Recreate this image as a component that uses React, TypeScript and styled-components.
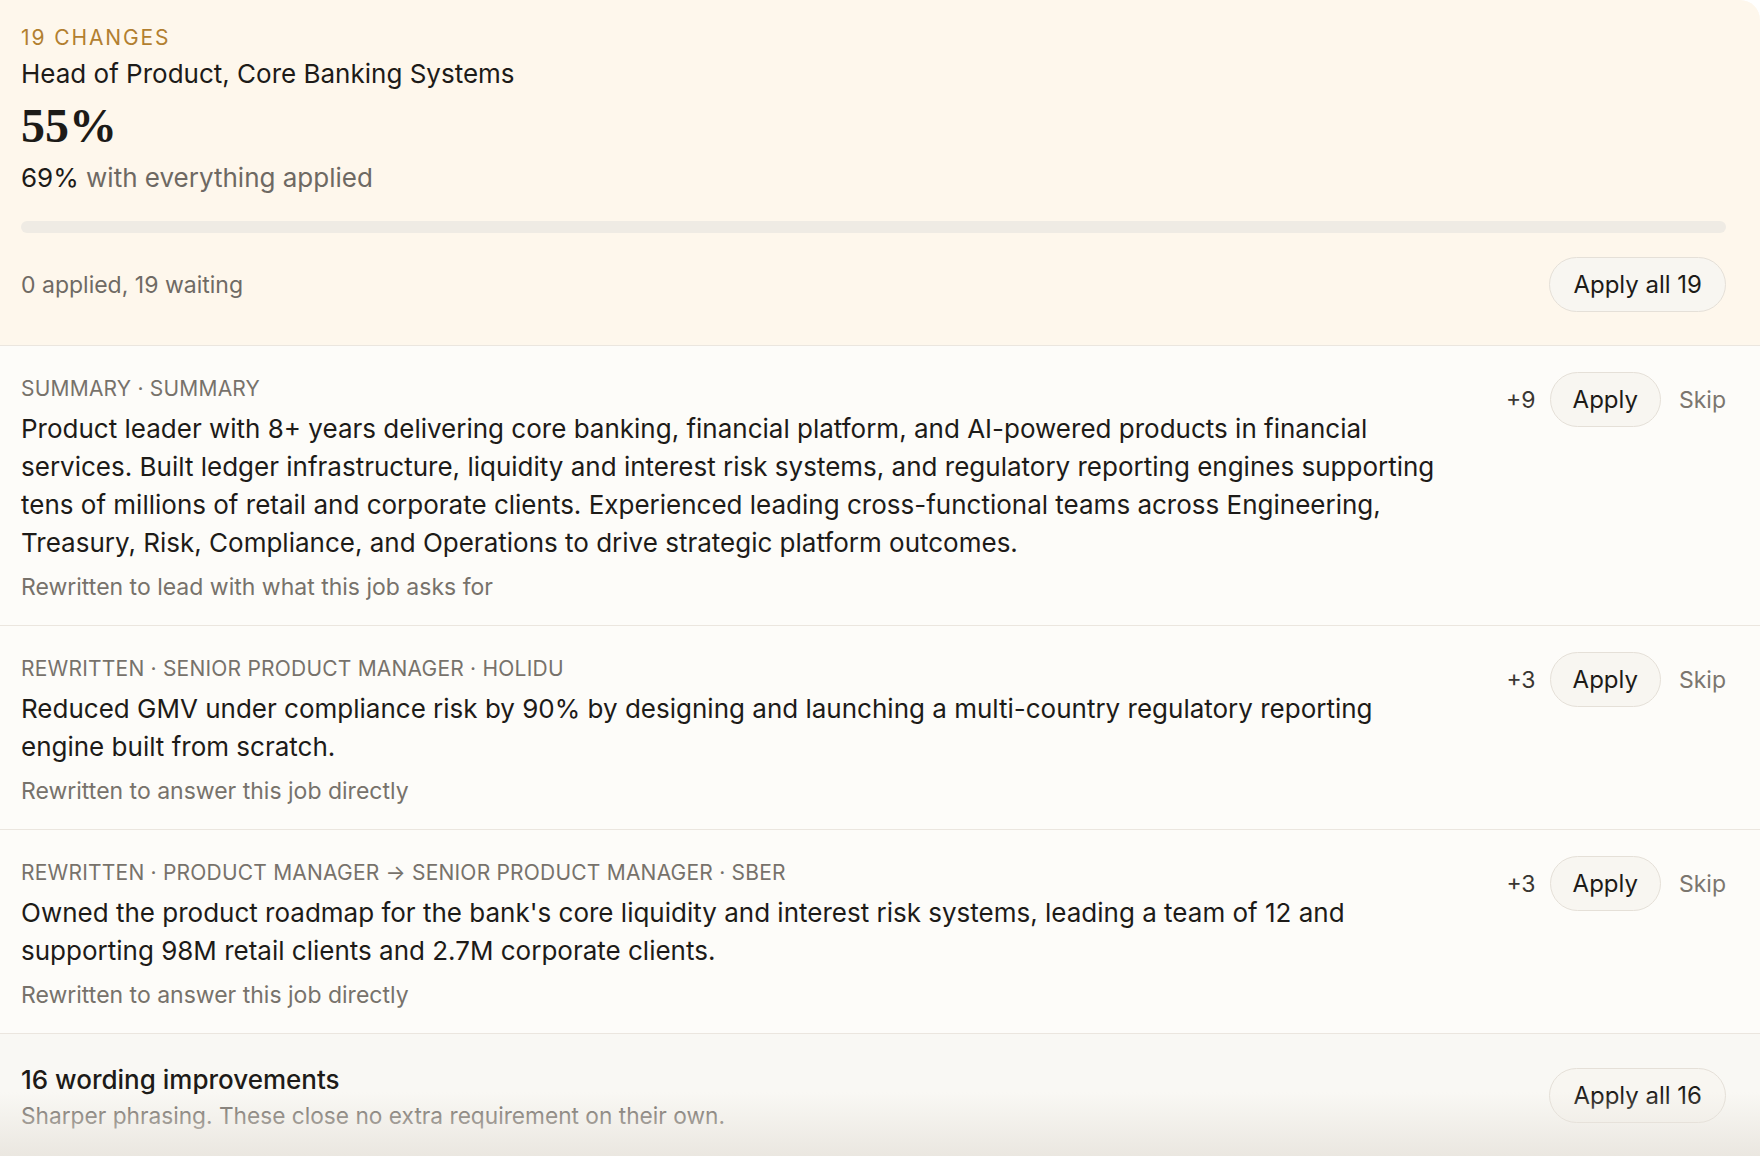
import React from "react";
import styled, { createGlobalStyle } from "styled-components";

const GlobalStyle = createGlobalStyle`
  html, body {
    margin: 0;
    padding: 0;
    background: #ffffff;
  }
  body {
    font-family: Inter, "Noto Sans", sans-serif;
    color: #1d1b18;
    -webkit-font-smoothing: antialiased;
  }
`;

const Panel = styled.div`
  position: relative;
  height: 100vh;
  overflow: hidden;
  background: #fdfcf9;
  border-top-right-radius: 20px;
`;

const Header = styled.header`
  background: #fef7ec;
  padding: 26px 34px 33px 21px;
  border-bottom: 1px solid #ebe6df;
`;

const Eyebrow = styled.div`
  font-size: 21px;
  line-height: 24px;
  letter-spacing: 0.09em;
  text-transform: uppercase;
  color: #b27f30;
`;

const Title = styled.h1`
  margin: 8px 0 0;
  font-size: 26px;
  line-height: 32px;
  font-weight: 400;
  color: #1d1b18;
`;

const Score = styled.div`
  margin-top: 8px;
  font-family: "Liberation Serif", "DejaVu Serif", serif;
  font-weight: 700;
  font-size: 48px;
  line-height: 56px;
  color: #1d1b18;
`;

const Projection = styled.div`
  margin-top: 8px;
  font-size: 26px;
  line-height: 32px;
  color: #6e6963;

  strong {
    font-weight: 400;
    color: #1d1b18;
  }
`;

const Track = styled.div`
  margin-top: 27px;
  height: 12px;
  border-radius: 6px;
  background: #efebe4;
  overflow: hidden;
`;

const Fill = styled.div`
  height: 100%;
  background: #c99546;
`;

const StatusRow = styled.div`
  margin-top: 24px;
  display: flex;
  align-items: center;
  justify-content: space-between;
`;

const Muted = styled.span`
  font-size: 23px;
  line-height: 28px;
  color: #6f6a64;
`;

const PillButton = styled.button<{ wide?: boolean }>`
  height: 55px;
  padding: 0 ${(p) => (p.wide ? 23 : 22)}px;
  border: 1.5px solid #e5e0d8;
  border-radius: 999px;
  background: #f8f6f1;
  font-family: inherit;
  font-size: 24px;
  color: #1d1b18;
  cursor: pointer;
  white-space: nowrap;
`;

const Change = styled.section`
  display: flex;
  gap: 60px;
  padding: 30px 34px 24px 21px;
  border-bottom: 1px solid #ebe6df;
`;

const ChangeBody = styled.div`
  flex: 1;
  min-width: 0;
`;

const Meta = styled.div`
  font-size: 21px;
  line-height: 26px;
  letter-spacing: 0.01em;
  text-transform: uppercase;
  color: #77726b;
`;

const Text = styled.p`
  margin: 8px 0 0;
  font-size: 26px;
  line-height: 38px;
  color: #1d1b18;
`;

const Reason = styled.div`
  margin-top: 11px;
  font-size: 23px;
  line-height: 28px;
  color: #77726b;
`;

const Actions = styled.div`
  display: flex;
  align-items: center;
  gap: 14px;
  margin-top: -4px;
  align-self: flex-start;
`;

const Gain = styled.span`
  font-size: 23px;
  color: #3a3733;
`;

const Skip = styled.button`
  margin-left: 4px;
  padding: 0;
  border: none;
  background: none;
  font-family: inherit;
  font-size: 23px;
  color: #7b766f;
  cursor: pointer;
`;

const Group = styled.section`
  display: flex;
  align-items: flex-start;
  justify-content: space-between;
  padding: 30px 34px 40px 21px;
  background: #f9f8f4;

  & > button {
    margin-top: 4px;
  }
`;

const GroupTitle = styled.div`
  font-size: 26px;
  line-height: 32px;
  font-weight: 500;
  color: #1d1b18;
`;

const GroupNote = styled.div`
  margin-top: 6px;
  font-size: 22.7px;
  line-height: 28px;
  color: #6f6a64;
`;

const Fade = styled.div`
  position: absolute;
  left: 0;
  right: 0;
  bottom: 0;
  height: 64px;
  pointer-events: none;
  background: linear-gradient(
    to bottom,
    rgba(234, 230, 223, 0) 0%,
    rgba(232, 228, 221, 0.85) 100%
  );
`;

type ChangeItem = {
  meta: string[];
  text: string;
  reason: string;
  gain: number;
};

const changes: ChangeItem[] = [
  {
    meta: ["Summary", "Summary"],
    text:
      "Product leader with 8+ years delivering core banking, financial platform, and AI-powered products in financial services. Built ledger infrastructure, liquidity and interest risk systems, and regulatory reporting engines supporting tens of millions of retail and corporate clients. Experienced leading cross-functional teams across Engineering, Treasury, Risk, Compliance, and Operations to drive strategic platform outcomes.",
    reason: "Rewritten to lead with what this job asks for",
    gain: 9,
  },
  {
    meta: ["Rewritten", "Senior Product Manager", "Holidu"],
    text:
      "Reduced GMV under compliance risk by 90% by designing and launching a multi-country regulatory reporting engine built from scratch.",
    reason: "Rewritten to answer this job directly",
    gain: 3,
  },
  {
    meta: ["Rewritten", "Product Manager \u2192 Senior Product Manager", "Sber"],
    text:
      "Owned the product roadmap for the bank's core liquidity and interest risk systems, leading a team of 12 and supporting 98M retail clients and 2.7M corporate clients.",
    reason: "Rewritten to answer this job directly",
    gain: 3,
  },
];

const applied = 0;
const total = 19;

export default function App() {
  return (
    <>
      <GlobalStyle />
      <Panel>
        <Header>
          <Eyebrow>{total} changes</Eyebrow>
          <Title>Head of Product, Core Banking Systems</Title>
          <Score>55%</Score>
          <Projection>
            <strong>69%</strong> with everything applied
          </Projection>
          <Track>
            <Fill style={{ width: `${(applied / total) * 100}%` }} />
          </Track>
          <StatusRow>
            <Muted>
              {applied} applied, {total - applied} waiting
            </Muted>
            <PillButton wide>Apply all {total}</PillButton>
          </StatusRow>
        </Header>

        {changes.map((c, i) => (
          <Change key={i}>
            <ChangeBody>
              <Meta>{c.meta.join(" \u00b7 ")}</Meta>
              <Text>{c.text}</Text>
              <Reason>{c.reason}</Reason>
            </ChangeBody>
            <Actions>
              <Gain>+{c.gain}</Gain>
              <PillButton>Apply</PillButton>
              <Skip>Skip</Skip>
            </Actions>
          </Change>
        ))}

        <Group>
          <div>
            <GroupTitle>16 wording improvements</GroupTitle>
            <GroupNote>Sharper phrasing. These close no extra requirement on their own.</GroupNote>
          </div>
          <PillButton wide>Apply all 16</PillButton>
        </Group>
        <Fade />
      </Panel>
    </>
  );
}
